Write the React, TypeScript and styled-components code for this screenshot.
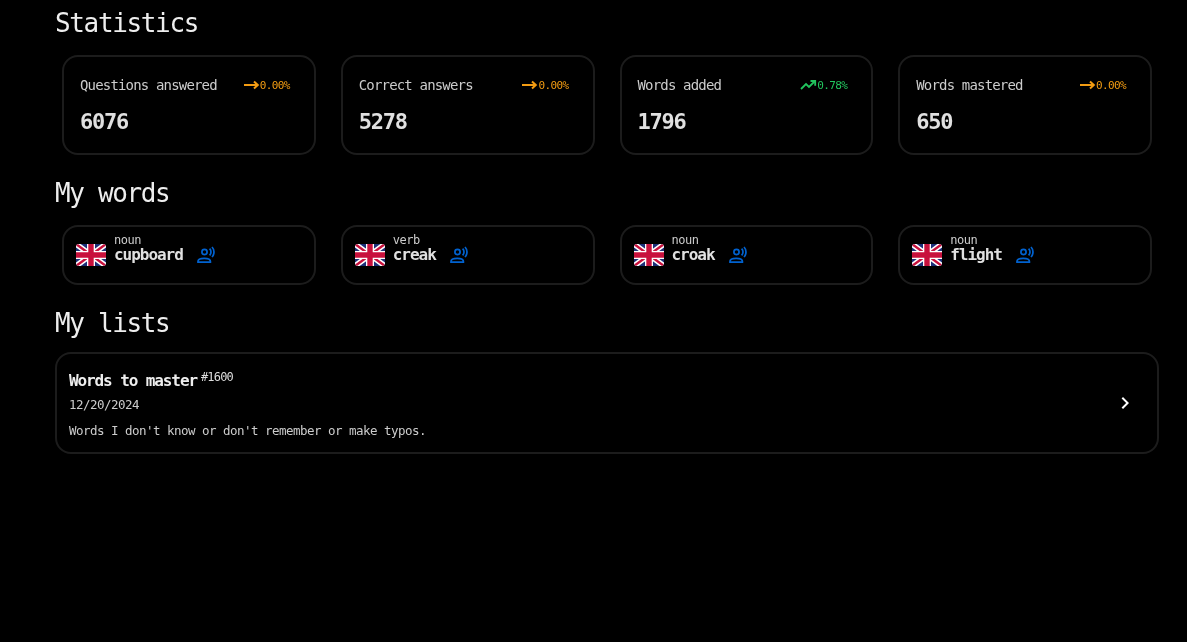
import { createGlobalStyle, styled, css } from "styled-components";
import { MdChevronRight } from "react-icons/md";

const GlobalStyle = createGlobalStyle`
  html, body {
    margin: 0;
    padding: 0;
    background: #000;
    color: #eee;
    font-family: "DejaVu Sans Mono", monospace;
  }
`;

// the original face is narrower than what is installed, so each size is squeezed to its advance
const mono = (size: number, advance: number, weight = 400) => css`
  font-size: ${size}px;
  letter-spacing: ${advance - size * 0.602}px;
  font-weight: ${weight};
`;

const Page = styled.main`
  width: 1104px;
  margin-left: 55px;
  will-change: transform;
`;

const Heading = styled.h2<{ $gap?: number }>`
  ${mono(26, 14.3)}
  color: #eee;
  margin: 0 0 ${(p) => p.$gap ?? 9}px;
  height: 46px;
  line-height: 46px;
`;

const CardRow = styled.div`
  display: grid;
  grid-template-columns: repeat(4, 1fr);
  gap: 25px;
  padding: 0 7px;
  margin-bottom: 15px;
`;

const panel = css`
  background: #000;
  border: 2px solid #1c1c1c;
  border-radius: 16px;
  box-sizing: border-box;
`;

const StatCard = styled.div`
  ${panel}
  height: 100px;
  padding: 16px;
`;

const StatHead = styled.div`
  display: flex;
  align-items: center;
  justify-content: space-between;
  height: 24px;
  padding-right: 8px;
`;

const StatLabel = styled.span`
  ${mono(14, 7.6)}
  color: #ccc;
`;

const Trend = styled.span<{ $up?: boolean }>`
  ${mono(11, 6)}
  display: inline-flex;
  align-items: center;
  color: ${(p) => (p.$up ? "#22c55e" : "#f39c12")};

  svg {
    width: 18px;
    height: 18px;
    flex-shrink: 0;
    margin-right: -1px;
  }
`;

const StatValue = styled.div`
  ${mono(22, 12, 700)}
  color: #e0e0e0;
  margin-top: 11px;
  line-height: 28px;
`;

const WordCard = styled.div`
  ${panel}
  height: 60px;
  padding: 0 12px;
  display: flex;
  align-items: center;
`;

const Flag = styled.svg`
  width: 30px;
  height: 22px;
  flex-shrink: 0;
`;

const WordText = styled.div`
  margin-left: 8px;
  margin-bottom: 12px;
  display: flex;
  flex-direction: column;
`;

const WordType = styled.span`
  ${mono(12, 6.75)}
  color: #ccc;
  line-height: 12px;
`;

const WordName = styled.span`
  ${mono(16, 8.6, 700)}
  color: #e0e0e0;
  line-height: 18px;
`;

const Speak = styled.svg`
  margin-left: 14px;
  width: 18px;
  height: 18px;
  color: #0062d0;
  flex-shrink: 0;
`;

const ListCard = styled.div`
  ${panel}
  height: 102px;
  padding: 0 12px;
  display: flex;
  align-items: center;
  justify-content: space-between;
`;

const ListBody = styled.div`
  display: flex;
  flex-direction: column;
  padding-top: 2px;
`;

const ListTitle = styled.div`
  display: flex;
  height: 26px;
  margin-top: 2px;
`;

const ListName = styled.span`
  ${mono(16, 8.53, 700)}
  color: #eee;
  line-height: 30px;
`;

const ListCount = styled.span`
  ${mono(12, 6.4)}
  color: #ddd;
  margin: 2px 0 0 4px;
  line-height: 18px;
`;

const ListDate = styled.div`
  ${mono(12.5, 7)}
  color: #ccc;
  line-height: 26px;
`;

const ListNote = styled.div`
  ${mono(12.5, 7)}
  color: #ccc;
  line-height: 26px;
`;

const Open = styled.span`
  display: inline-flex;
  color: #fff;
  margin-right: 8px;

  svg {
    width: 24px;
    height: 24px;
  }
`;

const stats = [
  { label: "Questions answered", value: "6076", trend: "0.00%", up: false },
  { label: "Correct answers", value: "5278", trend: "0.00%", up: false },
  { label: "Words added", value: "1796", trend: "0.78%", up: true },
  { label: "Words mastered", value: "650", trend: "0.00%", up: false },
];

const words = [
  { type: "noun", name: "cupboard" },
  { type: "verb", name: "creak" },
  { type: "noun", name: "croak" },
  { type: "noun", name: "flight" },
];

function FlatArrow() {
  return (
    <svg viewBox="0 0 18 18" fill="none" stroke="currentColor" strokeWidth="2">
      <path d="M1 9H14.5M11 5.5L14.8 9L11 12.5" />
    </svg>
  );
}

function RisingArrow() {
  return (
    <svg viewBox="0 0 18 18" fill="none" stroke="currentColor" strokeWidth="1.8">
      <path d="M1 13L6 8L9 11L15 5" />
      <path d="M10.5 5H15.2V9.7" />
    </svg>
  );
}

function SpeakIcon() {
  return (
    <Speak viewBox="0 0 18 18" fill="none" stroke="currentColor" strokeWidth="1.7">
      <circle cx="7.5" cy="6" r="2.6" />
      <path d="M1 16.2v-.9c0-1.8 2-3 6.2-3s6.2 1.2 6.2 3v.9z" />
      <path d="M12.6 2.6c1 1 1.4 2.2 1.4 3.4s-.4 2.4-1.4 3.4" />
      <path d="M15 1c1.3 1.3 2 3 2 5s-.7 3.7-2 5" />
    </Speak>
  );
}

function UkFlag({ id }: { id: string }) {
  return (
    <Flag viewBox="0 0 30 22">
      <defs>
        <clipPath id={id}>
          <rect width="30" height="22" rx="3" />
        </clipPath>
      </defs>
      <g clipPath={`url(#${id})`}>
        <rect width="30" height="22" fill="#1b2f78" />
        <path d="M0 0L30 22M30 0L0 22" stroke="#fff" strokeWidth="5.5" />
        <path d="M0 0L30 22M30 0L0 22" stroke="#c8103c" strokeWidth="2.4" />
        <path d="M15 0V22M0 11H30" stroke="#fff" strokeWidth="8" />
        <path d="M15 0V22M0 11H30" stroke="#c8103c" strokeWidth="5.4" />
      </g>
    </Flag>
  );
}

export default function App() {
  return (
    <Page>
      <GlobalStyle />
      <Heading>Statistics</Heading>
      <CardRow>
        {stats.map((s) => (
          <StatCard key={s.label}>
            <StatHead>
              <StatLabel>{s.label}</StatLabel>
              <Trend $up={s.up}>
                {s.up ? <RisingArrow /> : <FlatArrow />}
                {s.trend}
              </Trend>
            </StatHead>
            <StatValue>{s.value}</StatValue>
          </StatCard>
        ))}
      </CardRow>
      <Heading>My words</Heading>
      <CardRow>
        {words.map((w) => (
          <WordCard key={w.name}>
            <UkFlag id={`flag-${w.name}`} />
            <WordText>
              <WordType>{w.type}</WordType>
              <WordName>{w.name}</WordName>
            </WordText>
            <SpeakIcon />
          </WordCard>
        ))}
      </CardRow>
      <Heading $gap={6}>My lists</Heading>
      <ListCard>
        <ListBody>
          <ListTitle>
            <ListName>Words to master</ListName>
            <ListCount>#1600</ListCount>
          </ListTitle>
          <ListDate>12/20/2024</ListDate>
          <ListNote>Words I don't know or don't remember or make typos.</ListNote>
        </ListBody>
        <Open>
          <MdChevronRight />
        </Open>
      </ListCard>
    </Page>
  );
}
